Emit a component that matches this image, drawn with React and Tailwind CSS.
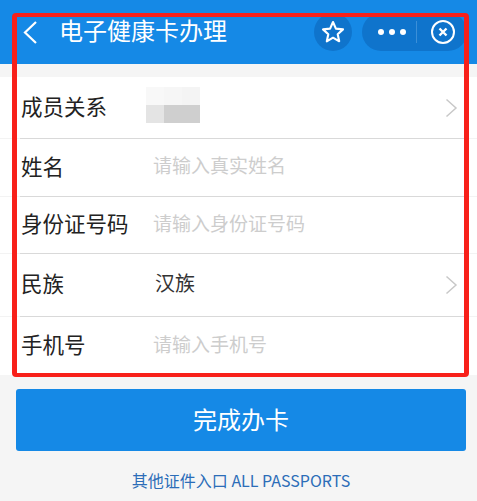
const font = { fontFamily: '"Noto Sans CJK SC", "Liberation Sans", sans-serif' };

function Chevron() {
  return (
    <svg width="13" height="20" viewBox="0 0 13 20" fill="none" stroke="#c8c8c8" strokeWidth="1.5" className="absolute right-[19px] top-1/2 -translate-y-1/2">
      <path d="M1.5 1.5 L11 10 L1.5 18.5" />
    </svg>
  );
}

function Row({ label, h, hint, value, arrow, blur, last }) {
  return (
    <div className={`relative flex items-center pl-[21px] ${last ? "" : "border-b border-[#f3f3f3]"} ${h}`}>
      <div className="mb-[4px] w-[132px] text-[21.5px] leading-none text-[#222]">{label}</div>
      {hint && <div className="mb-[6px] text-[19px] leading-none text-[#cdcdcd]">{hint}</div>}
      {value && <div className="mb-[4px] ml-[2px] text-[20px] leading-none text-[#333]">{value}</div>}
      {blur && (
        <div className="-mt-[5px] ml-[-7px] grid grid-cols-[18px_18px_18px] grid-rows-[18px_18px]">
          <div className="bg-[#f8f8f8]" />
          <div className="bg-[#f6f6f6]" />
          <div className="bg-[#f4f4f4]" />
          <div className="bg-[#e4e4e4]" />
          <div className="bg-[#cfcfcf]" />
          <div className="bg-[#cfcfcf]" />
        </div>
      )}
      {arrow && <Chevron />}
      {!last && <div className="absolute bottom-[-1px] left-[20px] right-[12px] h-px bg-[#d9d9d9]" />}
    </div>
  );
}

export default function App() {
  return (
    <div className="relative h-[501px] w-[477px] overflow-hidden bg-[#f5f5f5]" style={font}>
      <div className="flex h-[64px] items-start bg-[#1589e6] text-white">
        <svg width="16" height="24" viewBox="0 0 16 24" fill="none" stroke="#fff" strokeWidth="2.2" className="ml-[22px] mt-[20px]">
          <path d="M14 2 L3 12.5 L14 23" />
        </svg>
        <div className="ml-[21px] mt-[14px] text-[24px] leading-[32px]">电子健康卡办理</div>
        <div className="ml-auto mr-[10px] mt-[13px] flex items-center gap-[10px]">
          <div className="flex h-[38px] w-[38px] items-center justify-center rounded-full bg-[#0f74cc]">
            <svg width="24" height="24" viewBox="0 0 24 24" fill="none" stroke="#fff" strokeWidth="2.1" strokeLinejoin="round">
              <path d="M12 2 L14.9 8.6 L22 9.4 L16.7 14.2 L18.2 21.3 L12 17.7 L5.8 21.3 L7.3 14.2 L2 9.4 L9.1 8.6 Z" />
            </svg>
          </div>
          <div className="flex h-[38px] w-[105px] items-center rounded-full bg-[#0f74cc]">
            <div className="flex w-[44px] justify-end gap-[5px]">
              <span className="h-[6px] w-[6px] rounded-full bg-white" />
              <span className="h-[6px] w-[6px] rounded-full bg-white" />
              <span className="h-[6px] w-[6px] rounded-full bg-white" />
            </div>
            <div className="ml-[10px] h-[22px] w-px bg-[#3b8fd8]" />
            <svg width="24" height="24" viewBox="0 0 24 24" fill="none" stroke="#fff" className="ml-[14px]">
              <circle cx="12" cy="12" r="11" strokeWidth="2" />
              <path d="M8.5 8.5 L15.5 15.5 M15.5 8.5 L8.5 15.5" strokeWidth="2.4" />
            </svg>
          </div>
        </div>
      </div>

      <div className="mt-[13px] bg-white">
        <Row label="成员关系" h="h-[62px]" blur arrow />
        <Row label="姓名" h="h-[58px]" hint="请输入真实姓名" />
        <Row label="身份证号码" h="h-[57px]" hint="请输入身份证号码" />
        <Row label="民族" h="h-[63px]" value="汉族" arrow />
        <Row label="手机号" h="h-[58px]" hint="请输入手机号" last />
      </div>

      <div className="ml-[16px] mr-[11px] mt-[14px] flex h-[62px] items-center justify-center rounded-[3px] bg-[#1589e6] pb-[2px] text-[24px] leading-none text-white">
        完成办卡
      </div>
      <div className="ml-[16px] mr-[11px] mt-[19px] text-center text-[16px] leading-[20px] text-[#2c6db8]">其他证件入口 ALL PASSPORTS</div>

      <div className="pointer-events-none absolute left-[12px] top-[13px] h-[364px] w-[457px] rounded-[4px] border-x-[5px] border-y-4 border-[#f8201a]" />
    </div>
  );
}
